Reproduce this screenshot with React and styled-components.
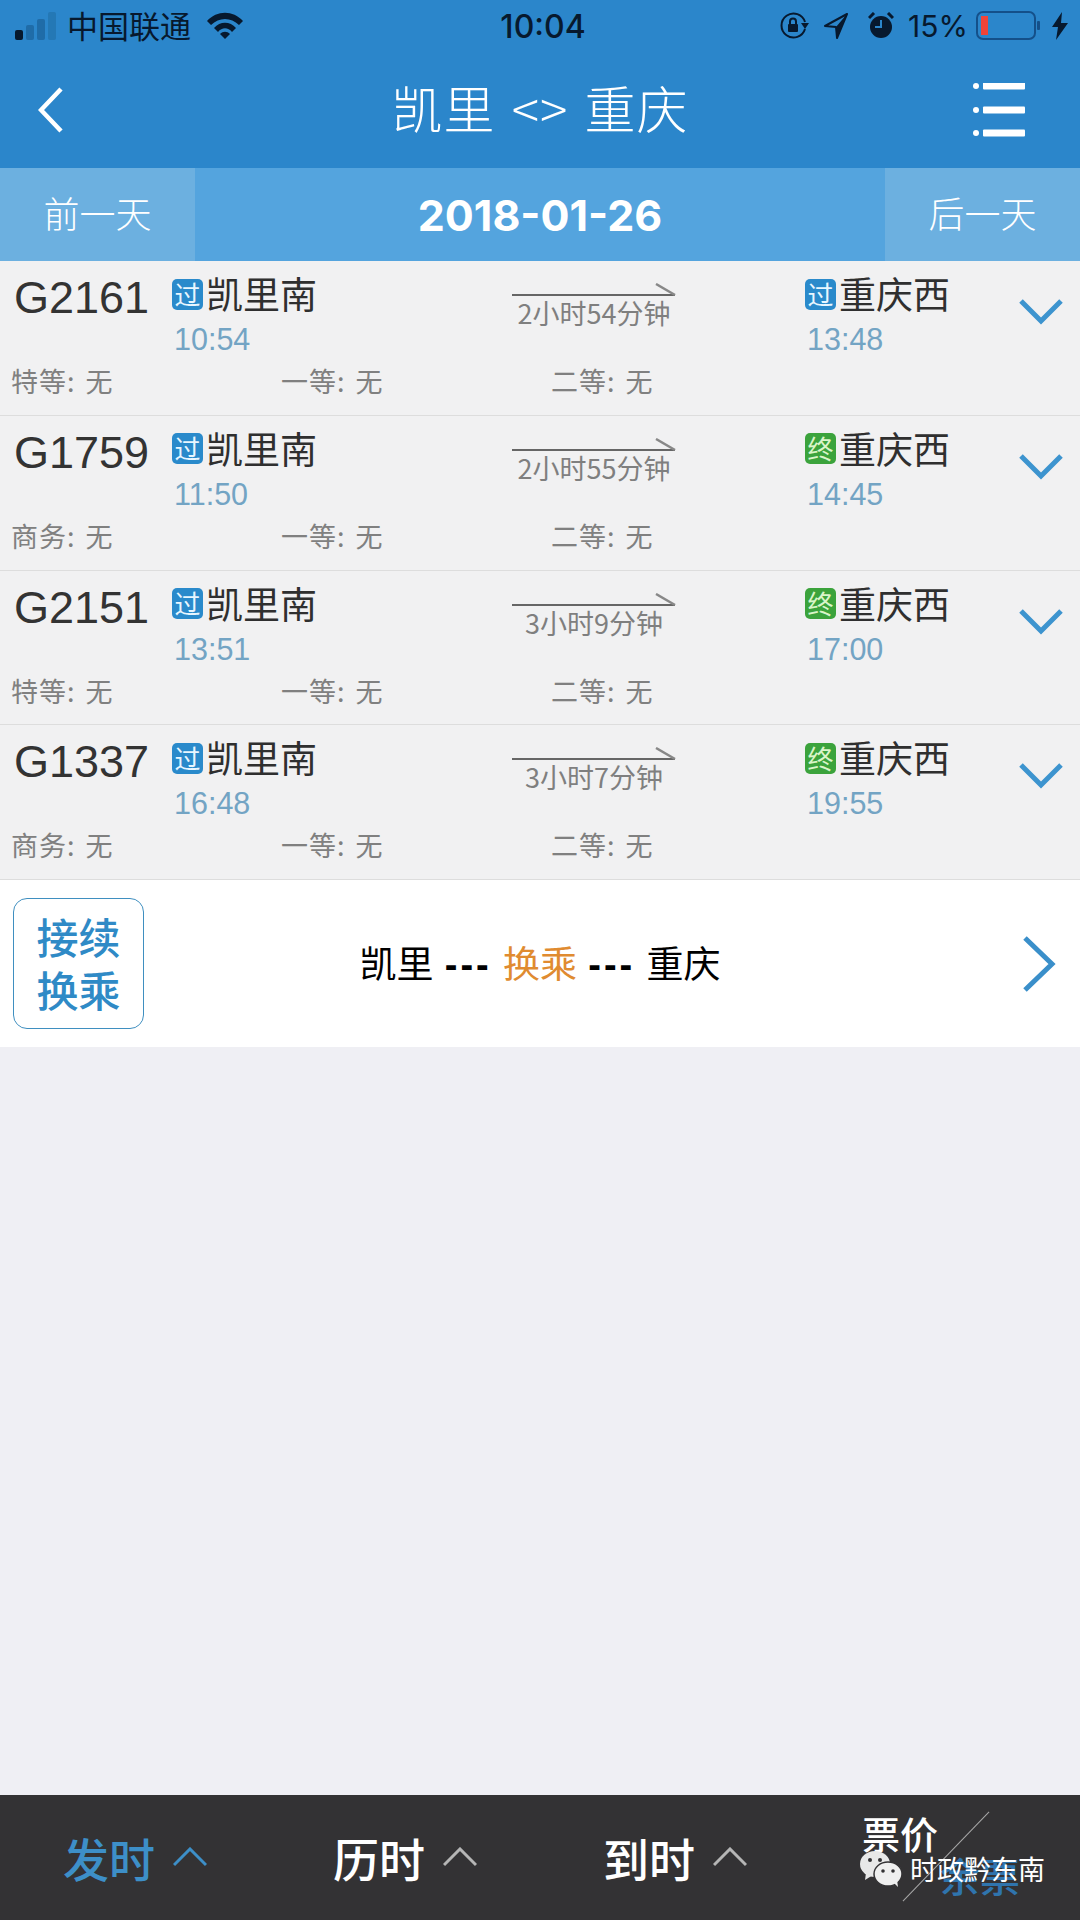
import React from 'react'
import styled, { createGlobalStyle } from 'styled-components'

const CJK = '"Noto Sans CJK SC", "Liberation Sans", sans-serif'
const LATIN = '"Liberation Sans", "Noto Sans CJK SC", sans-serif'

const trains = [
  { no: 'G2161', from: '10:54', to: '13:48', dur: '2小时54分钟', seat: '特等', end: '过' },
  { no: 'G1759', from: '11:50', to: '14:45', dur: '2小时55分钟', seat: '商务', end: '终' },
  { no: 'G2151', from: '13:51', to: '17:00', dur: '3小时9分钟', seat: '特等', end: '终' },
  { no: 'G1337', from: '16:48', to: '19:55', dur: '3小时7分钟', seat: '商务', end: '终' },
]

const Chevron = ({ points, color, width, w, h, vb }) => (
  <svg width={w} height={h} viewBox={vb} fill="none">
    <polyline points={points} stroke={color} strokeWidth={width} />
  </svg>
)

const Signal = () => (
  <svg width="42" height="30" viewBox="0 0 42 30">
    <rect x="0" y="19" width="8" height="10" rx="2" fill="#07192e" />
    <rect x="11" y="14" width="8" height="15" rx="2" fill="#1f6ca8" />
    <rect x="22" y="8" width="8" height="21" rx="2" fill="#1f6ca8" />
    <rect x="33" y="1" width="8" height="28" rx="2" fill="#2478b5" />
  </svg>
)

const Wifi = () => (
  <svg width="36" height="28" viewBox="0 0 36 28">
    <path d="M0 9C10 -2 26 -2 36 9L32 13C24 5 12 5 4 13Z" fill="#07192e" />
    <path d="M7 16C13 9 23 9 29 16L25 20C21 15 15 15 11 20Z" fill="#07192e" />
    <path d="M13 22C16 19 20 19 23 22L18 27Z" fill="#07192e" />
  </svg>
)

const RotationLock = () => (
  <svg width="30" height="28" viewBox="0 0 30 28" fill="none">
    <path d="M25 17A12 12 0 1 1 25 10" stroke="#07192e" strokeWidth="2" />
    <path d="M21 11H29L25 17Z" fill="#07192e" />
    <rect x="8" y="12" width="10" height="8" rx="1" fill="#07192e" />
    <path d="M10 12V9.500A3 3 0 0 1 16 9.500V12" stroke="#07192e" strokeWidth="2" />
  </svg>
)

const Location = () => (
  <svg width="24" height="26" viewBox="0 0 24 26" fill="none">
    <path d="M23 1L1 13L12 14L13 25Z" stroke="#07192e" strokeWidth="2" strokeLinejoin="round" />
    <path d="M23 1L12 14L13 25Z" fill="#07192e" />
  </svg>
)

const Alarm = () => (
  <svg width="26" height="28" viewBox="0 0 26 28">
    <circle cx="13" cy="15" r="11" fill="#07192e" />
    <path d="M13 8V15H7" stroke="#2b86cb" strokeWidth="2" fill="none" />
    <path d="M1 6L6 1M25 6L20 1" stroke="#07192e" strokeWidth="3" />
  </svg>
)

const Battery = () => (
  <svg width="66" height="30" viewBox="0 0 66 30">
    <rect x="1" y="1" width="58" height="27" rx="6" fill="none" stroke="#14508a" strokeWidth="2" />
    <rect x="5" y="5" width="7" height="19" fill="#f04438" />
    <rect x="61" y="10" width="3" height="9" rx="1" fill="#14508a" />
  </svg>
)

const Bolt = () => (
  <svg width="16" height="28" viewBox="0 0 16 28">
    <path d="M10 0L0 15H6L4 28L16 11H9Z" fill="#07192e" />
  </svg>
)

const MenuIcon = () => (
  <svg width="52" height="54" viewBox="0 0 52 54">
    {[3, 27, 50].map((y) => (
      <g key={y} fill="#fff">
        <circle cx="3" cy={y} r="3" />
        <rect x="10" y={y - 3.500} width="42" height="7" rx="1" />
      </g>
    ))}
  </svg>
)

const HalfArrow = () => (
  <svg width="164" height="14" viewBox="0 0 164 14" fill="none">
    <path d="M0 12H163" stroke="#666" strokeWidth="2" />
    <path d="M144 1L163 12" stroke="#888" strokeWidth="2.500" />
  </svg>
)

const WeChat = () => (
  <svg width="42" height="36" viewBox="0 0 42 36">
    <ellipse cx="15" cy="13" rx="15" ry="13" fill="#e8e8e8" />
    <path d="M6 22L5 29L13 24Z" fill="#e8e8e8" />
    <circle cx="10" cy="9" r="2" fill="#333234" />
    <circle cx="20" cy="9" r="2" fill="#333234" />
    <ellipse cx="28" cy="23" rx="14" ry="12" stroke="#333234" strokeWidth="1.500" fill="#efefef" />
    <path d="M34 32L38 36L37 29Z" fill="#efefef" />
    <circle cx="23" cy="20" r="1.800" fill="#333234" />
    <circle cx="33" cy="20" r="1.800" fill="#333234" />
  </svg>
)

const SeatList = ({ seat }) => (
  <SeatLine>
    <Seat>{seat}: 无</Seat>
    <Seat>一等: 无</Seat>
    <Seat>二等: 无</Seat>
  </SeatLine>
)

const TrainRow = ({ train }) => (
  <Row>
    <TopLine>
      <TrainNo>{train.no}</TrainNo>
      <Stop>
        <StopName>
          <Badge>过</Badge>凯里南
        </StopName>
        <StopTime>{train.from}</StopTime>
      </Stop>
      <Duration>
        <HalfArrow />
        <DurationText>{train.dur}</DurationText>
      </Duration>
      <Stop $last>
        <StopName>
          <Badge $end={train.end === '终'}>{train.end}</Badge>重庆西
        </StopName>
        <StopTime>{train.to}</StopTime>
      </Stop>
      <Expand>
        <Chevron w="44" h="26" vb="0 0 44 26" points="2,2 22,22 42,2" color="#3d94cf" width="5" />
      </Expand>
    </TopLine>
    <SeatList seat={train.seat} />
  </Row>
)

const SortTab = ({ label, active }) => (
  <Tab $active={active}>
    {label}
    <Chevron
      w="34"
      h="20"
      vb="0 0 34 20"
      points="1,18 17,2 33,18"
      color={active ? '#3d8fc8' : '#b5b5b5'}
      width="3"
    />
  </Tab>
)

export default function App() {
  return (
    <Page>
      <GlobalStyle />
      <Header>
        <StatusBar>
          <StatusLeft>
            <Signal />
            <Carrier>中国联通</Carrier>
            <Wifi />
          </StatusLeft>
          <Clock>10:04</Clock>
          <StatusRight>
            <RotationLock />
            <Location />
            <Alarm />
            <BatteryText>15%</BatteryText>
            <Battery />
            <Bolt />
          </StatusRight>
        </StatusBar>
        <NavBar>
          <BackButton>
            <Chevron w="26" h="46" vb="0 0 26 46" points="23,2 3,23 23,44" color="#fff" width="4.500" />
          </BackButton>
          <NavTitle>凯里 &lt;&gt; 重庆</NavTitle>
          <NavRight>
            <MenuIcon />
          </NavRight>
        </NavBar>
      </Header>
      <DateBar>
        <DayButton>前一天</DayButton>
        <DateText>2018-01-26</DateText>
        <DayButton>后一天</DayButton>
      </DateBar>
      <List>
        {trains.map((train) => (
          <TrainRow key={train.no} train={train} />
        ))}
        <TransferRow>
          <TransferBox>
            <div>接续</div>
            <div>换乘</div>
          </TransferBox>
          <TransferText>
            凯里 <Dash>---</Dash> <Orange>换乘</Orange> <Dash>---</Dash> 重庆
          </TransferText>
          <TransferArrow>
            <Chevron w="34" h="56" vb="0 0 34 56" points="3,2 30,28 3,54" color="#3a8fca" width="5" />
          </TransferArrow>
        </TransferRow>
      </List>
      <BottomBar>
        <SortTab label="发时" active />
        <SortTab label="历时" />
        <SortTab label="到时" />
        <SplitTab>
          <PriceLabel>票价</PriceLabel>
          <TicketLabel>余票</TicketLabel>
          <Diagonal />
          <Watermark>
            <WeChat />
            时政黔东南
          </Watermark>
        </SplitTab>
      </BottomBar>
    </Page>
  )
}

const GlobalStyle = createGlobalStyle`
  * { box-sizing: border-box; }
  body { margin: 0; background: #efeff4; }
`
const Page = styled.div`
  width: 1080px;
  height: 1920px;
  display: flex;
  flex-direction: column;
  overflow: hidden;
  font-family: ${CJK};
`
const Header = styled.div`
  background: #2b86cb;
  height: 168px;
`
const StatusBar = styled.div`
  height: 52px;
  display: grid;
  grid-template-columns: 1fr auto 1fr;
  align-items: center;
  color: #07192e;
  padding: 0 12px 0 18px;
`
const StatusLeft = styled.div`
  display: flex;
  align-items: center;
  gap: 10px;
  margin-left: -3px;
  svg:last-child { margin-left: 6px; }
`
const Carrier = styled.span`
  font-size: 31px;
  line-height: 40px;
  margin-bottom: 2px;
`
const Clock = styled.span`
  font: 500 32px Inter, sans-serif;
`
const StatusRight = styled.div`
  display: flex;
  align-items: center;
  justify-content: flex-end;
  gap: 14px;
  svg:nth-child(3) { margin-left: 6px; }
  svg:last-child { margin-left: -4px; }
`
const BatteryText = styled.span`
  font: 400 30px Inter, sans-serif;
  margin-right: -6px;
`
const NavBar = styled.div`
  height: 116px;
  display: grid;
  grid-template-columns: 1fr auto 1fr;
  align-items: center;
  padding: 0 55px;
`
const BackButton = styled.div`
  margin-left: -17px;
  display: flex;
`
const NavTitle = styled.div`
  color: #fff;
  font-size: 51px;
  font-weight: 300;
  letter-spacing: 1px;
  word-spacing: 4px;
  padding-bottom: 6px;
`
const NavRight = styled.div`
  display: flex;
  justify-content: flex-end;
`
const DateBar = styled.div`
  height: 93px;
  display: flex;
  align-items: center;
  background: #54a4de;
`
const DayButton = styled.div`
  width: 195px;
  height: 100%;
  display: flex;
  align-items: center;
  justify-content: center;
  padding-bottom: 6px;
  background: #6cb0e0;
  color: #fff;
  font-size: 36px;
  font-weight: 300;
`
const DateText = styled.div`
  flex: 1;
  text-align: center;
  color: #fff;
  font: 700 43px Inter, sans-serif;
`
const List = styled.div`
  flex: 1;
  background: #efeff4;
`
const Row = styled.div`
  height: 154.750px;
  padding-top: 15px;
  background: #f1f1f2;
  border-bottom: 1px solid #dddddd;
`
const TopLine = styled.div`
  display: flex;
  align-items: flex-start;
  padding-left: 14px;
`
const TrainNo = styled.div`
  width: 158px;
  margin-top: 1px;
  font: 400 45px/42px ${LATIN};
  color: #333;
`
const Stop = styled.div`
  width: ${(p) => (p.$last ? '214px' : '340px')};
`
const StopName = styled.div`
  display: flex;
  align-items: center;
  margin-top: -4px;
  font-size: 37px;
  line-height: 42px;
  color: #2f2f2f;
`
const Badge = styled.span`
  width: 31px;
  height: 31px;
  margin: 2px 3px 0 0;
  border-radius: 5px;
  background: ${(p) => (p.$end ? '#3ba33c' : '#2a8acb')};
  color: ${(p) => (p.$end ? '#d9f5c9' : '#e8f6ff')};
  font-size: 26px;
  line-height: 30px;
  text-align: center;
`
const StopTime = styled.div`
  margin-top: 4px;
  padding-left: 2px;
  font: 400 30.500px/42px ${LATIN};
  color: #73a4c4;
`
const Duration = styled.div`
  width: 293px;
  margin-top: 7px;
  svg { display: block; }
`
const DurationText = styled.div`
  width: 164px;
  margin-top: 1px;
  text-align: center;
  font-size: 27px;
  line-height: 30px;
  color: #7f7f7f;
`
const Expand = styled.div`
  margin-top: 23px;
`
const SeatLine = styled.div`
  display: flex;
  margin-top: 3px;
  padding-left: 11px;
`
const Seat = styled.div`
  width: 270px;
  font-size: 27px;
  line-height: 36px;
  letter-spacing: 1px;
  word-spacing: 3px;
  color: #808080;
`
const TransferRow = styled.div`
  height: 167px;
  display: grid;
  grid-template-columns: 1fr auto 1fr;
  align-items: center;
  padding: 0 24px;
  background: #fff;
`
const TransferBox = styled.div`
  width: 131px;
  height: 131px;
  margin-left: -11px;
  padding-bottom: 4px;
  border: 1px solid #3f8fc0;
  border-radius: 14px;
  display: flex;
  flex-direction: column;
  align-items: center;
  justify-content: center;
  color: #2f8ac6;
  font-size: 42px;
  font-weight: 500;
  line-height: 53px;
`
const TransferText = styled.div`
  padding-bottom: 4px;
  font-size: 37px;
  color: #000;
  word-spacing: 3px;
`
const Dash = styled.span`
  font: 700 38px ${LATIN};
  letter-spacing: 3px;
`
const Orange = styled.span`
  color: #e08b30;
`
const TransferArrow = styled.div`
  display: flex;
  justify-content: flex-end;
`
const BottomBar = styled.div`
  height: 125px;
  display: grid;
  grid-template-columns: repeat(3, 270px) 1fr;
  background: #333234;
`
const Tab = styled.div`
  display: flex;
  align-items: center;
  justify-content: center;
  gap: 18px;
  padding-bottom: 1px;
  font-size: 46px;
  font-weight: 500;
  color: ${(p) => (p.$active ? '#3d8fc8' : '#fff')};
`
const SplitTab = styled.div`
  position: relative;
  padding: 16px 0 0 52px;
`
const PriceLabel = styled.div`
  color: #fff;
  font-size: 38px;
  line-height: 44px;
  font-weight: 500;
`
const TicketLabel = styled.div`
  margin: -2px 0 0 78px;
  color: #2f74ad;
  font-size: 40px;
  line-height: 44px;
  font-weight: 500;
`
const Diagonal = styled.div`
  position: absolute;
  left: 74px;
  top: 61px;
  width: 124px;
  height: 1px;
  background: #a8a8a8;
  transform: rotate(-46deg);
`
const Watermark = styled.div`
  position: absolute;
  left: 50px;
  top: 54px;
  display: flex;
  align-items: center;
  gap: 8px;
  color: #fff;
  font-size: 27px;
  white-space: nowrap;
`
